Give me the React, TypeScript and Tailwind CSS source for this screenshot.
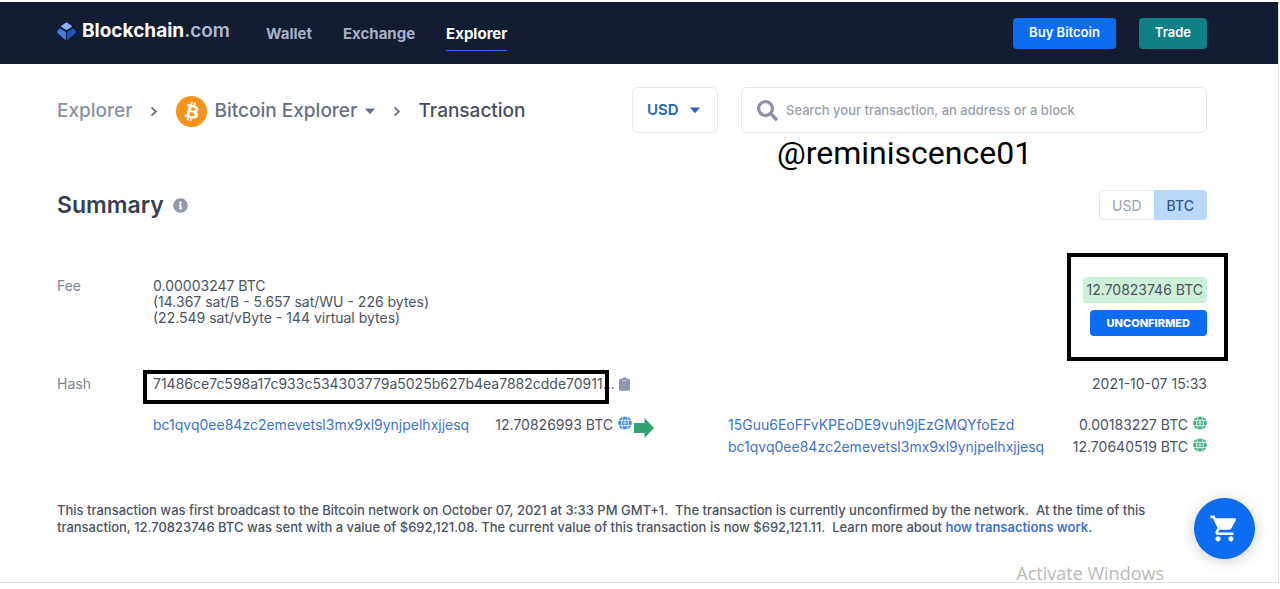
import type { ReactNode } from "react";
import { FaSearch, FaInfoCircle } from "react-icons/fa";
import { MdShoppingCart } from "react-icons/md";

const outputs = [
  { address: "15Guu6EoFFvKPEoDE9vuh9jEzGMQYfoEzd", amount: "0.00183227 BTC" },
  { address: "bc1qvq0ee84zc2emevetsl3mx9xl9ynjpelhxjjesq", amount: "12.70640519 BTC" },
];

function LogoMark() {
  return (
    <svg width="19" height="19" viewBox="0 0 19 19" aria-hidden="true">
      <path d="M8.4 0.9Q9.5 0 10.6 0.9L14.6 3.8Q15.3 4.5 14.6 5.1L10.6 7.5Q9.5 8.2 8.4 7.5L4.4 5.1Q3.7 4.5 4.4 3.8Z" fill="#85b5f8" />
      <path d="M2.6 6.2 8 9.4Q8.9 10 8.9 11V18.6L1 11.6Q-0.4 10.2 0.8 8.5Z" fill="#3d7fe8" />
      <path d="M16.4 6.2 11 9.4Q10.1 10 10.1 11V18.6L18 11.6Q19.4 10.2 18.2 8.5Z" fill="#1d56b8" />
    </svg>
  );
}

function Separator() {
  return (
    <svg width="8" height="11" viewBox="0 0 8 11" fill="none" aria-hidden="true">
      <path d="M1.5 1.5 6 5.5 1.5 9.5" stroke="#677184" strokeWidth="1.7" />
    </svg>
  );
}

function Caret({ className }: { className: string }) {
  return (
    <svg width="10" height="6" viewBox="0 0 10 6" aria-hidden="true" className={className}>
      <path d="M0.6 0.4H9.4Q10 0.8 9.5 1.3L5.6 5.5Q5 6 4.4 5.5L0.5 1.3Q0 0.8 0.6 0.4Z" fill="currentColor" />
    </svg>
  );
}

function BitcoinMark() {
  return (
    <svg width="31" height="31" viewBox="0 0 32 32" aria-hidden="true" className="shrink-0">
      <circle cx="16" cy="16" r="16" fill="#f7931a" />
      <path
        fill="#fff"
        d="M23.19 14.02c.31-2.1-1.28-3.22-3.47-3.98l.71-2.84-1.73-.43-.69 2.77c-.45-.12-.92-.22-1.38-.33l.69-2.79-1.72-.43-.71 2.84c-.38-.08-.75-.17-1.11-.26l-2.38-.6-.46 1.85s1.28.3 1.26.31c.7.18.82.64.8 1.01l-.8 3.24-1.14 4.54c-.08.21-.3.53-.79.41.02.02-1.26-.32-1.26-.32l-.86 1.99 2.25.56 1.23.32-.72 2.87 1.73.43.71-2.84c.47.13.93.25 1.38.36l-.71 2.83 1.73.43.72-2.87c2.95.56 5.17.34 6.1-2.33.76-2.15-.03-3.39-1.58-4.2 1.13-.26 1.98-1 2.2-2.54zm-3.95 5.54c-.54 2.15-4.16.99-5.33.7l.95-3.82c1.17.29 4.94.87 4.38 3.12zm.53-5.57c-.49 1.95-3.49.96-4.47.72l.86-3.46c.98.24 4.12.7 3.61 2.74z"
      />
    </svg>
  );
}

function Globe({ className }: { className: string }) {
  return (
    <svg width="14" height="14" viewBox="0 0 14 14" aria-hidden="true" className={className}>
      <circle cx="7" cy="7" r="6.8" fill="currentColor" />
      <g fill="none" stroke="#fff" strokeWidth="0.8">
        <path d="M0 4.4H14M0 9.6H14" />
        <ellipse cx="7" cy="7" rx="3.4" ry="7" />
      </g>
      <path d="M7 3V11M4.5 7H9.5" stroke="#fff" strokeWidth="0.7" />
    </svg>
  );
}

function Clipboard() {
  return (
    <svg width="11" height="14" viewBox="0 0 11 14" aria-hidden="true">
      <path d="M1.5 1.7H3.3Q3.6 0.2 5.5 0.2T7.7 1.7H9.5Q11 1.7 11 3.2V12.3Q11 13.8 9.5 13.8H1.5Q0 13.8 0 12.3V3.2Q0 1.7 1.5 1.7Z" fill="#9097ae" />
      <path d="M3 3.7H8" stroke="#c8ccda" strokeWidth="0.9" />
    </svg>
  );
}

function NavLink({ children, active = false }: { children: ReactNode; active?: boolean }) {
  return (
    <a
      href="#"
      className={
        active
          ? "border-b border-[#2a6ce0] pb-1 text-white"
          : "border-b border-transparent pb-1 text-[#a9b2c9]"
      }
    >
      {children}
    </a>
  );
}

function Row({ address, amount, tone }: { address: string; amount: string; tone: string }) {
  return (
    <li className="flex items-center justify-between">
      <a href="#" className="text-[#3f73c8]">{address}</a>
      <span className="flex gap-[5px]">
        {amount}
        <Globe className={tone} />
      </span>
    </li>
  );
}

export default function App() {
  return (
    <div className="bg-white pt-0.5 font-['Inter',sans-serif] text-[#4c5361]">
      <div className="relative mr-px border-r border-b border-[#dfe1e5] pb-[46px]">
        <header className="flex h-[62px] items-center justify-between bg-[#121d33] pr-[71px] pl-[57px] font-semibold">
          <div className="flex items-center gap-9">
            <a href="#" className="flex items-center gap-1.5 pb-1 text-[19px] font-bold text-white">
              <LogoMark />
              <span>
                Blockchain<span className="font-semibold text-[#b0b8cf]">.com</span>
              </span>
            </a>
            <nav className="flex gap-[31px] pt-2 text-[15px] font-bold">
              <NavLink>Wallet</NavLink>
              <NavLink>Exchange</NavLink>
              <NavLink active>Explorer</NavLink>
            </nav>
          </div>
          <div className="flex gap-[23px] text-[13px] text-white">
            <button className="h-[31px] rounded bg-[#0c6cf2] px-4">Buy Bitcoin</button>
            <button className="h-[31px] rounded bg-[#117f86] px-4">Trade</button>
          </div>
        </header>

        <main className="pr-[71px] pl-[57px]">
          <div className="flex items-center pt-[23px]">
            <nav className="flex flex-1 items-center pt-0.5 text-[19px] font-medium text-[#677184]" aria-label="Breadcrumb">
              <a href="#" className="mr-[17px] text-[#8a92a2]">Explorer</a>
              <Separator />
              <label className="relative mx-[18px] flex items-center gap-2">
                <BitcoinMark />
                <select aria-label="Explorer" className="appearance-none pr-[17px]">
                  <option>Bitcoin Explorer</option>
                </select>
                <Caret className="pointer-events-none absolute right-0" />
              </label>
              <Separator />
              <span className="ml-[18px] text-[#474f60]">Transaction</span>
            </nav>
            <label className="relative flex items-center text-[#2563bd]">
              <select aria-label="Currency" className="h-[46px] w-[86px] appearance-none rounded-md border border-[#e7e8ee] px-[14px] text-[15px] font-semibold">
                <option>USD</option>
              </select>
              <Caret className="pointer-events-none absolute right-[18px]" />
            </label>
            <div className="relative ml-[23px] w-[466px]">
              <label className="flex h-[46px] items-center gap-2 rounded-md border border-[#e7e8ee] px-[15px]">
                <FaSearch className="size-[21px] text-[#8e94a5]" />
                <input
                  type="search"
                  aria-label="Search"
                  placeholder="Search your transaction, an address or a block"
                  className="min-w-0 flex-1 pt-0.5 text-[13px] font-medium outline-none placeholder:text-[#9a9fac]"
                />
              </label>
              <span className="absolute top-[47px] left-9 font-['Roboto',sans-serif] text-[32px] leading-[38px] text-black">
                @reminiscence01
              </span>
            </div>
          </div>

          <div className="flex items-center justify-between pt-[57px]">
            <h1 className="flex items-center gap-[9px] text-[23px] leading-[30px] font-semibold text-[#353f52]">
              Summary
              <FaInfoCircle className="size-[15px] text-[#9098a9]" />
            </h1>
            <div className="flex text-[14px]">
              <button className="h-[30px] rounded-l border border-r-0 border-[#e7e8ee] px-3 text-[#9a9fac]">USD</button>
              <button className="h-[30px] rounded-r bg-[#b9d9fa] px-[13px] font-medium text-[#31588f]">BTC</button>
            </div>
          </div>

          <section className="pt-[57px] text-[14px] leading-4">
            <div className="flex items-start">
              <span className="w-24 pt-px text-[#7d8594]">Fee</span>
              <p className="flex-1 pt-px">
                0.00003247 BTC
                <br />
                (14.367 sat/B - 5.657 sat/WU - 226 bytes)
                <br />
                (22.549 sat/vByte - 144 virtual bytes)
              </p>
              <div className="relative flex flex-col items-end gap-[7px]">
                <span className="rounded bg-[#cdf0d9] px-1 py-[5px]">12.70823746 BTC</span>
                <span className="rounded bg-[#0c6cf2] px-[17px] py-[5px] text-[11px] font-extrabold text-white">UNCONFIRMED</span>
                <div className="pointer-events-none absolute -top-6 -right-[21px] -left-4 h-[108px] border-4 border-black" />
              </div>
            </div>

            <div className="flex items-center pt-10">
              <span className="w-24 text-[#7d8594]">Hash</span>
              <div className="relative mr-1">
                71486ce7c598a17c933c534303779a5025b627b4ea7882cdde70911...
                <div className="pointer-events-none absolute -top-1.5 right-1.5 -left-2.5 h-[34px] border-4 border-black" />
              </div>
              <button aria-label="Copy hash">
                <Clipboard />
              </button>
              <time className="ml-auto">2021-10-07 15:33</time>
            </div>

            <div className="grid grid-cols-[1fr_96px_1fr] pt-[22px] pl-24 leading-[22px]">
              <ul>
                <Row address="bc1qvq0ee84zc2emevetsl3mx9xl9ynjpelhxjjesq" amount="12.70826993 BTC" tone="mt-0.5 text-[#4389e6]" />
              </ul>
              <svg width="20" height="20" viewBox="0 0 20 20" aria-hidden="true" className="mt-1 ml-0.5">
                <path d="M0 5H10.5V0L20 10 10.5 20V15H0Z" fill="#2fa373" />
              </svg>
              <ul>
                {outputs.map((output) => (
                  <Row key={output.address} address={output.address} amount={output.amount} tone="mt-0.5 text-[#41ac81]" />
                ))}
              </ul>
            </div>

            <p className="pt-11 pr-5 text-[13px] leading-[17px] font-medium">
              This transaction was first broadcast to the Bitcoin network on October 07, 2021 at 3:33 PM GMT+1.&nbsp; The
              transaction is currently unconfirmed by the network.&nbsp; At the time of this transaction, 12.70823746 BTC was sent
              with a value of $692,121.08. The current value of this transaction is now $692,121.11.&nbsp; Learn more about{" "}
              <a href="#" className="font-semibold text-[#3f73c8]">how transactions work.</a>
            </p>
          </section>
        </main>

        <button
          aria-label="Shopping cart"
          className="absolute right-[23px] bottom-[23px] flex size-[61px] items-center justify-center rounded-full bg-[#0c6cf2] text-white shadow-[0_2px_14px_rgba(0,0,0,0.2)]"
        >
          <MdShoppingCart className="size-[31px]" />
        </button>
        <span className="absolute right-[114px] bottom-0 font-['Open_Sans',sans-serif] text-[18px] leading-[18px] text-[#bababa]">
          Activate Windows
        </span>
      </div>
    </div>
  );
}
